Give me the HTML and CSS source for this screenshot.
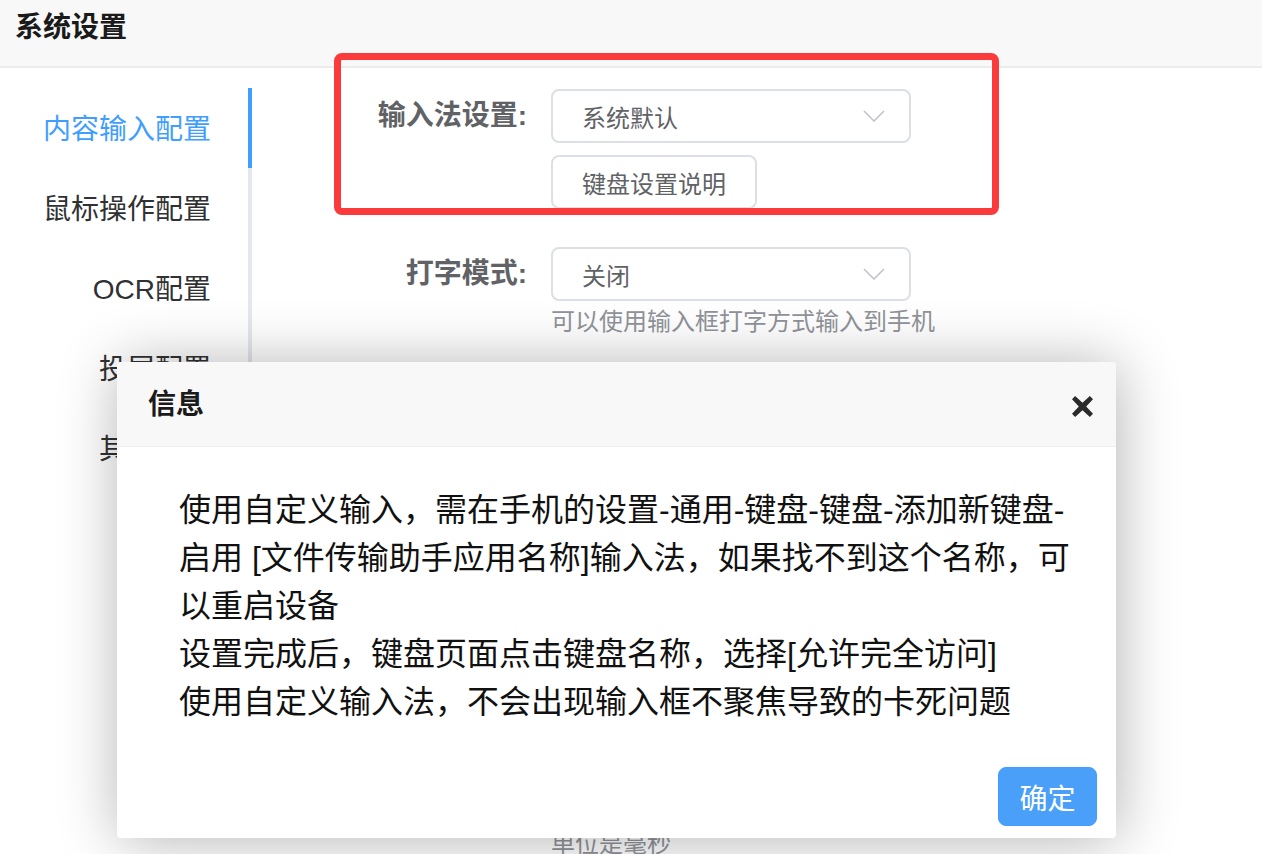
FILE: index.html
```html
<!DOCTYPE html>
<html lang="zh-CN">
<head>
<meta charset="utf-8">
<title>系统设置</title>
<link rel="stylesheet" href="styles.css">
</head>
<body>
<header class="topbar"><h1 class="topbar-title">系统设置</h1></header>
<div class="layout">
  <nav class="tabs">
    <div class="tab tab-active">内容输入配置</div>
    <div class="tab">鼠标操作配置</div>
    <div class="tab">OCR配置</div>
    <div class="tab">投屏配置</div>
    <div class="tab">其他配置</div>
  </nav>
  <main class="form">
    <div class="row">
      <label class="row-label">输入法设置:</label>
      <div class="row-ctrl">
        <div class="select"><span>系统默认</span><svg class="chev" viewBox="0 0 22 12" width="22" height="12"><path d="M1 1 L11 11 L21 1" fill="none" stroke="#c0c4cc" stroke-width="1.6"/></svg></div>
        <button class="btn">键盘设置说明</button>
      </div>
    </div>
    <div class="row">
      <label class="row-label">打字模式:</label>
      <div class="row-ctrl">
        <div class="select"><span>关闭</span><svg class="chev" viewBox="0 0 22 12" width="22" height="12"><path d="M1 1 L11 11 L21 1" fill="none" stroke="#c0c4cc" stroke-width="1.6"/></svg></div>
        <div class="help">可以使用输入框打字方式输入到手机</div>
      </div>
    </div>
    <div class="row row-hidden"></div>
    <div class="row row-hidden"></div>
    <div class="row row-hidden row-hidden-short"></div>
    <div class="row">
      <label class="row-label">按键间隔:</label>
      <div class="row-ctrl">
        <div class="select"><span>50</span></div>
        <div class="help">单位是毫秒</div>
      </div>
    </div>
  </main>
</div>

<div class="annot"></div>

<div class="dialog">
  <div class="dialog-head">
    <span class="dialog-title">信息</span>
    <svg class="dialog-close" viewBox="0 0 20 20" width="21" height="21"><path d="M3 0 L10 6.5 L17 0 L20 3 L13.5 10 L20 17 L17 20 L10 13.5 L3 20 L0 17 L6.5 10 L0 3 Z" fill="#2b2b2b"/></svg>
  </div>
  <div class="dialog-body">
    <div class="line">使用自定义输入，需在手机的设置-通用-键盘-键盘-添加新键盘-</div>
    <div class="line">启用 [文件传输助手应用名称]输入法，如果找不到这个名称，可</div>
    <div class="line">以重启设备</div>
    <div class="line">设置完成后，键盘页面点击键盘名称，选择[允许完全访问]</div>
    <div class="line">使用自定义输入法，不会出现输入框不聚焦导致的卡死问题</div>
  </div>
  <div class="dialog-foot"><button class="btn-primary">确定</button></div>
</div>
</body>
</html>
```
FILE: styles.css
```css
* { box-sizing: border-box; }
html, body { margin: 0; padding: 0; }
body {
  width: 1262px;
  height: 854px;
  overflow: hidden;
  background: #fff;
  font-family: "Liberation Sans", "Noto Sans CJK SC", sans-serif;
  position: relative;
}
.topbar {
  height: 68px;
  background: #f8f8f8;
  border-bottom: 2px solid #ececec;
  padding-left: 15px;
}
.topbar-title {
  margin: 0;
  font-size: 28px;
  line-height: 56px;
  font-weight: bold;
  color: #1a1a1a;
}
.layout {
  display: flex;
  align-items: flex-start;
}
.tabs {
  width: 252px;
  flex: none;
  margin-top: 20px;
  border-right: 4px solid #e4e7ed;
}
.tab {
  height: 80px;
  line-height: 84px;
  text-align: right;
  padding-right: 37px;
  font-size: 28px;
  color: #303133;
  white-space: nowrap;
}
.tab-active {
  color: #409eff;
  margin-right: -4px;
  border-right: 4px solid #409eff;
}
.form {
  flex: 1;
  padding-top: 21px;
}
.row {
  display: flex;
  gap: 24px;
  margin-bottom: 38px;
}
.row-hidden {
  height: 94px;
}
.row-hidden-short {
  height: 89px;
}
.row-label {
  width: 275px;
  flex: none;
  text-align: right;
  font-size: 28px;
  line-height: 54px;
  font-weight: bold;
  color: #606266;
}
.row-ctrl {
  width: 360px;
  display: flex;
  flex-direction: column;
  align-items: flex-start;
}
.select {
  width: 360px;
  height: 54px;
  border: 2px solid #dcdfe6;
  border-radius: 8px;
  padding: 0 24px 0 29px;
  display: flex;
  align-items: center;
  justify-content: space-between;
  font-size: 24px;
  color: #606266;
}
.chev { display: block; }
.btn {
  margin-top: 12px;
  height: 54px;
  width: 206px;
  border: 2px solid #dcdfe6;
  border-radius: 8px;
  background: #fff;
  font-family: inherit;
  font-size: 24px;
  color: #606266;
  padding: 0;
}
.help {
  margin-top: 3px;
  font-size: 24px;
  line-height: 36px;
  color: #909399;
  white-space: nowrap;
}
.annot {
  position: absolute;
  left: 334px;
  top: 53px;
  width: 665px;
  height: 162px;
  border: 7px solid #fb3a3c;
  border-radius: 8px;
}
.dialog {
  position: absolute;
  left: 117px;
  top: 362px;
  width: 999px;
  height: 476px;
  background: #fff;
  border-radius: 4px;
  box-shadow: 2px 2px 60px rgba(0, 0, 0, 0.3);
  display: flex;
  flex-direction: column;
  overflow: hidden;
}
.dialog-head {
  position: relative;
  height: 85px;
  background: #f8f8f8;
  border-bottom: 1px solid #eeeeee;
  padding-left: 31px;
  flex: none;
}
.dialog-title {
  font-size: 28px;
  line-height: 86px;
  font-weight: bold;
  color: #1a1a1a;
}
.dialog-close {
  position: absolute;
  right: 23px;
  top: 34px;
}
.dialog-body {
  flex: 1;
  padding: 39px 20px 0 62px;
  font-size: 32px;
  line-height: 48px;
  color: #111;
}
.line { white-space: nowrap; }
.dialog-foot {
  display: flex;
  justify-content: flex-end;
  padding: 0 19px 12px 0;
}
.btn-primary {
  width: 99px;
  height: 59px;
  border: 1px solid #409eff;
  border-radius: 8px;
  background: #4a9ff9;
  color: #fff;
  font-family: inherit;
  font-size: 28px;
  padding: 0;
}
```
